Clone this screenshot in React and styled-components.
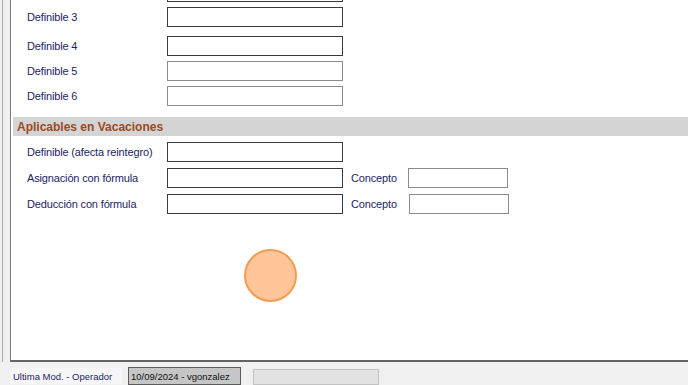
import React from "react";
import styled, { createGlobalStyle } from "styled-components";

const Global = createGlobalStyle`
  html, body { margin: 0; padding: 0; }
  body {
    background: #f0f0f0;
    font-family: "Liberation Sans", Arial, sans-serif;
    overflow: hidden;
  }
`;

const Screen = styled.div`
  position: relative;
  width: 688px;
  height: 385px;
  overflow: hidden;
  display: flex;
  flex-direction: column;
  background: #f0f0f0;
`;

const Frame = styled.div`
  margin-left: 2px;
  border-left: 1px solid #a9a9a9;
  padding-left: 7px;
  height: 362px;
  display: flex;
  flex-direction: column;
`;

const Panel = styled.div`
  flex: 1;
  background: #ffffff;
  border-left: 1px solid #7a7a7a;
  border-bottom: 2px solid #646464;
  overflow: hidden;
  display: flex;
  flex-direction: column;
`;

const Rows = styled.div`
  margin-top: ${(p) => p.$top || 0}px;
  display: flex;
  flex-direction: column;
`;

const Row = styled.div`
  display: flex;
  align-items: center;
  height: 20px;
  margin-top: ${(p) => p.$gap || 0}px;
  padding-left: 16px;
`;

const Label = styled.span`
  width: 140px;
  font-size: 11px;
  letter-spacing: -0.15px;
  color: #1d1d64;
  white-space: nowrap;
`;

const Field = styled.div`
  box-sizing: border-box;
  width: ${(p) => p.$w || 176}px;
  height: 20px;
  margin-left: ${(p) => p.$ml || 0}px;
  background: #fff;
  border: 1px solid ${(p) => (p.$dim ? "#8c8c8c" : "#3a3a3a")};
`;

const SideLabel = styled.span`
  width: 57px;
  margin-left: 8px;
  font-size: 11px;
  letter-spacing: -0.15px;
  color: #1d1d64;
`;

const Band = styled.div`
  margin-top: 11px;
  margin-left: 2px;
  height: 19px;
  background: #d4d4d4;
  display: flex;
  align-items: center;
  padding-left: 4px;
  font-size: 12px;
  font-weight: bold;
  color: #9a4a26;
`;

const StatusBar = styled.div`
  display: flex;
  align-items: flex-start;
  padding-top: 5px;
  height: 18px;
`;

const StatusLabel = styled.div`
  margin-left: 10px;
  width: 112px;
  height: 16px;
  margin-top: 1px;
  background: #f6f6f8;
  display: flex;
  align-items: center;
  padding-left: 3px;
  box-sizing: border-box;
  font-size: 9.5px;
  color: #1d1d64;
`;

const StatusValue = styled.div`
  margin-left: 6px;
  width: 113px;
  height: 18px;
  box-sizing: border-box;
  background: #c6c6c6;
  border: 1px solid #5a5a5a;
  display: flex;
  align-items: center;
  padding-left: 2px;
  font-size: 9.5px;
  color: #111;
`;

const StatusEmpty = styled.div`
  margin-left: 12px;
  margin-top: 2px;
  width: 126px;
  height: 16px;
  box-sizing: border-box;
  background: #e2e2e2;
  border: 1px solid #c2c2c2;
`;

const ClickMark = styled.div`
  position: absolute;
  left: 244px;
  top: 249px;
  width: 53px;
  height: 53px;
  box-sizing: border-box;
  border-radius: 50%;
  background: #fdc598;
  border: 2px solid #f19c55;
`;

export default function App() {
  return (
    <Screen>
      <Global />
      <Frame>
        <Panel>
          <Rows $top={-18}>
            <Row>
              <Label />
              <Field />
            </Row>
            <Row $gap={5}>
              <Label>Definible 3</Label>
              <Field />
            </Row>
            <Row $gap={9}>
              <Label>Definible 4</Label>
              <Field />
            </Row>
            <Row $gap={5}>
              <Label>Definible 5</Label>
              <Field $dim />
            </Row>
            <Row $gap={5}>
              <Label>Definible 6</Label>
              <Field $dim />
            </Row>
          </Rows>
          <Band>Aplicables en Vacaciones</Band>
          <Rows>
            <Row $gap={6}>
              <Label>Definible (afecta reintegro)</Label>
              <Field />
            </Row>
            <Row $gap={6}>
              <Label>Asignación con fórmula</Label>
              <Field />
              <SideLabel>Concepto</SideLabel>
              <Field $w={100} $dim />
            </Row>
            <Row $gap={6}>
              <Label>Deducción con fórmula</Label>
              <Field />
              <SideLabel>Concepto</SideLabel>
              <Field $w={100} $ml={1} $dim />
            </Row>
          </Rows>
        </Panel>
      </Frame>
      <StatusBar>
        <StatusLabel>Ultima Mod. - Operador</StatusLabel>
        <StatusValue>10/09/2024 - vgonzalez</StatusValue>
        <StatusEmpty />
      </StatusBar>
      <ClickMark />
    </Screen>
  );
}
